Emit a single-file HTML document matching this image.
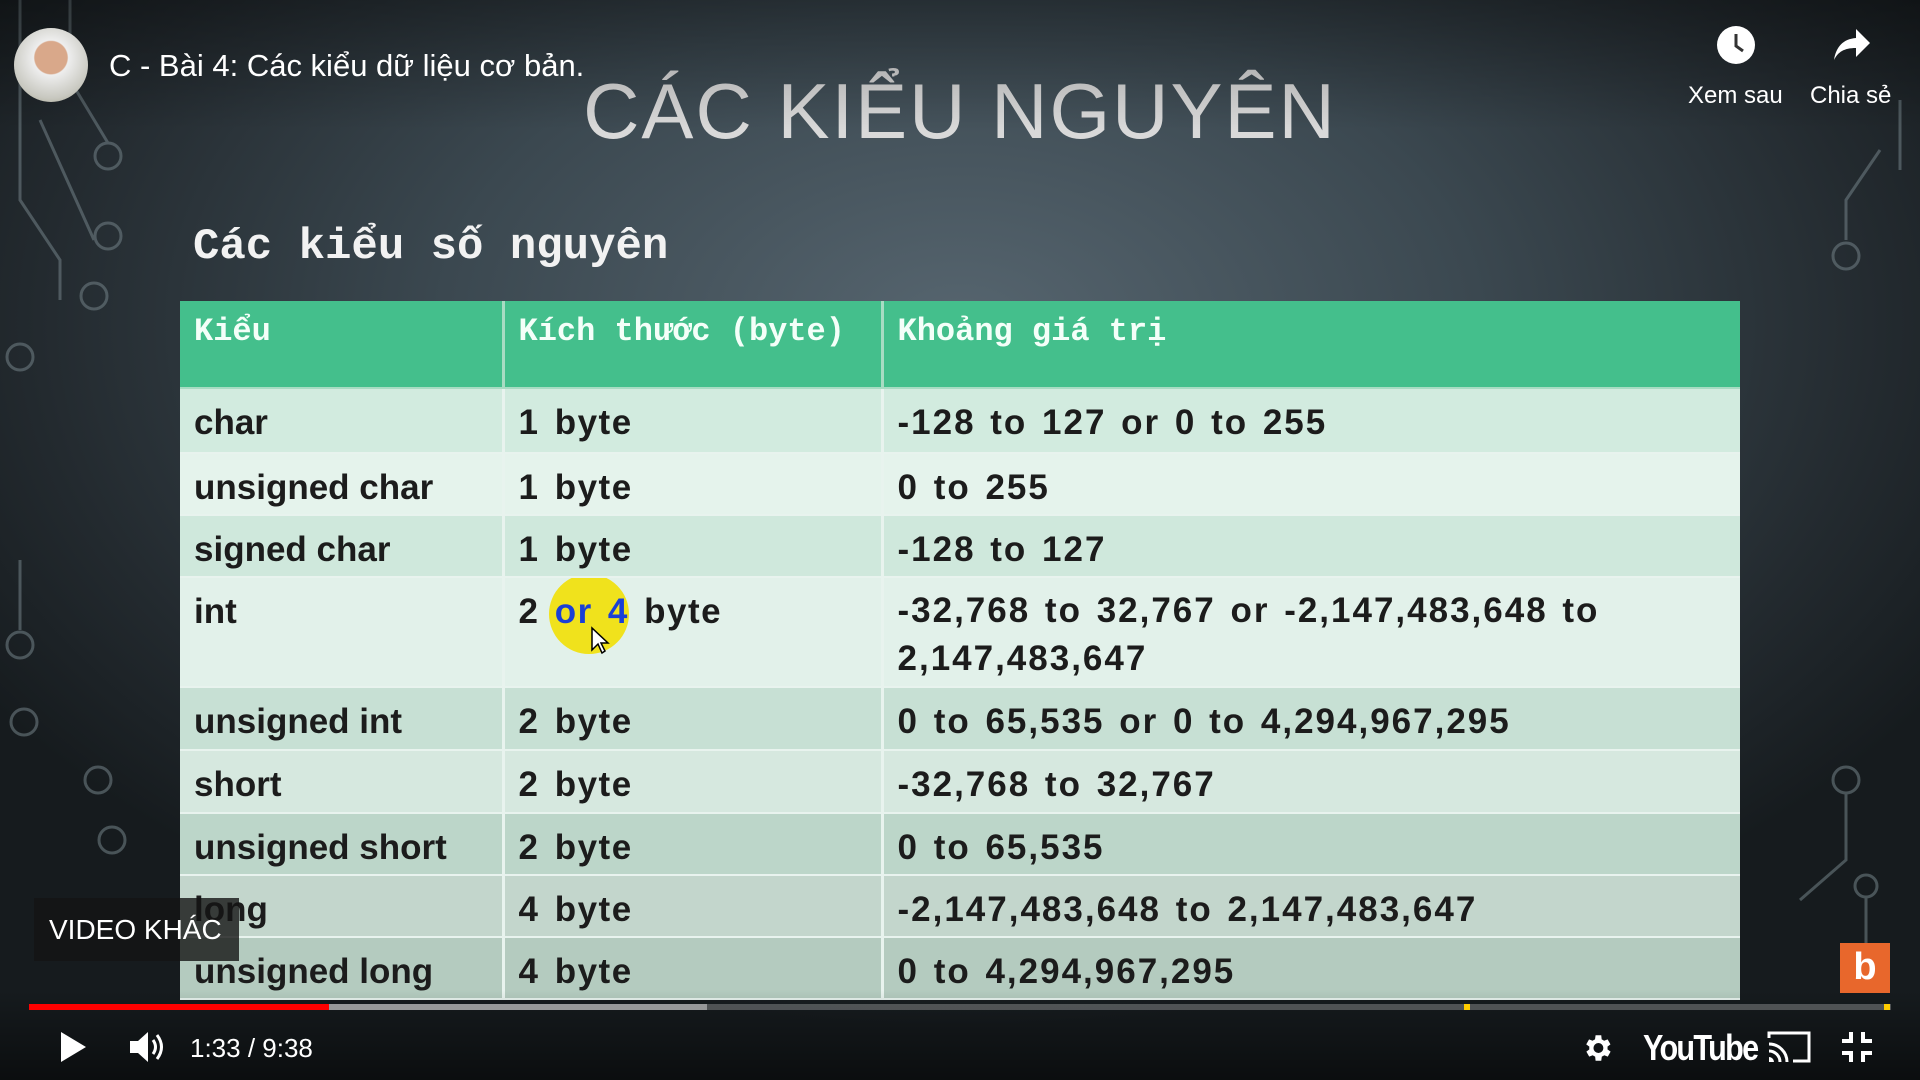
<!DOCTYPE html>
<html><head><meta charset="utf-8"><style>
*{margin:0;padding:0;box-sizing:border-box}
body{width:1920px;height:1080px;overflow:hidden;position:relative;font-family:"Liberation Sans",sans-serif;
background:radial-gradient(ellipse 60% 65% at 50% 30%,#56656f 0%,#3b4850 45%,#232a2f 80%,#161b1e 100%);}
.abs{position:absolute}
.title{left:0;width:1920px;top:66px;text-align:center;font-size:78px;color:#d9d9d9;letter-spacing:2px;font-weight:normal}
.sub{left:193px;top:222px;font-family:"Liberation Mono",monospace;font-weight:bold;font-size:44px;color:#f2f2f2}
table{position:absolute;left:180px;top:301px;width:1560px;border-collapse:collapse;table-layout:fixed;font-weight:bold;font-size:35px;color:#1c1c1c;white-space:nowrap}
td{border-right:3px solid #e8f3ee;border-bottom:2px solid #e8f3ee;padding:0 14px;vertical-align:top;overflow:hidden}
td:last-child{border-right:none}
td:nth-child(2){letter-spacing:1.5px;word-spacing:4px}
td:nth-child(3){letter-spacing:2px;word-spacing:3px}
tr.h td{background:#44bf8c;color:#f4fff9;font-family:"Liberation Mono",monospace;font-size:32px;height:87px;padding-top:12px;border-color:#a8dcc3;letter-spacing:0;word-spacing:0}
tr td{padding-top:14px}
.hl{position:relative;z-index:0;color:#1a3fd6}
.hl::before{content:"";position:absolute;left:-6px;top:-18px;width:80px;height:80px;border-radius:50%;background:#f0e21c;z-index:-1}
</style></head><body>
<svg class="abs" style="left:0;top:0" width="1920" height="1080" fill="none" stroke="#6c7a80" stroke-width="3" opacity=".6">
<path d="M20 0 V200 L60 260 V300"/><circle cx="108" cy="156" r="13"/><circle cx="108" cy="236" r="13"/><circle cx="94" cy="296" r="13"/><circle cx="20" cy="357" r="13"/>
<path d="M70 0 V80 L108 143"/><path d="M40 120 L94 240"/><path d="M20 560 V630"/><circle cx="20" cy="645" r="13"/><circle cx="24" cy="722" r="13"/><circle cx="98" cy="780" r="13"/><circle cx="112" cy="840" r="13"/>
<path d="M1880 150 L1846 200 V240"/><circle cx="1846" cy="256" r="13"/><circle cx="1846" cy="780" r="13"/><circle cx="1866" cy="886" r="11"/><path d="M1846 793 V860 L1800 900"/><path d="M1866 897 V950"/><path d="M1900 100 V170"/>
</svg>
<div class="abs title">CÁC KIỂU NGUYÊN</div>
<div class="abs sub">Các kiểu số nguyên</div>
<table>
<colgroup><col style="width:323px"><col style="width:379px"><col></colgroup>
<tr class="h"><td>Kiểu</td><td>Kích thước (byte)</td><td>Khoảng giá trị</td></tr>
<tr style="height:65px;background:#d2ebdf"><td>char</td><td>1 byte</td><td>-128 to 127 or 0 to 255</td></tr>
<tr style="height:62px;background:#e5f3ec"><td>unsigned char</td><td>1 byte</td><td>0 to 255</td></tr>
<tr style="height:62px;background:#cfe8dc"><td>signed char</td><td>1 byte</td><td>-128 to 127</td></tr>
<tr style="height:110px;background:#e2f1ea"><td>int</td><td>2 <span class="hl">or 4</span> byte</td><td style="line-height:48px;padding-top:9px">-32,768 to 32,767 or -2,147,483,648 to<br>2,147,483,647</td></tr>
<tr style="height:63px;background:#c7e0d4"><td>unsigned int</td><td>2 byte</td><td>0 to 65,535 or 0 to 4,294,967,295</td></tr>
<tr style="height:63px;background:#d6e8df"><td>short</td><td>2 byte</td><td>-32,768 to 32,767</td></tr>
<tr style="height:62px;background:#bcd6c9"><td>unsigned short</td><td>2 byte</td><td>0 to 65,535</td></tr>
<tr style="height:62px;background:#c3d6cc"><td>long</td><td>4 byte</td><td>-2,147,483,648 to 2,147,483,647</td></tr>
<tr style="height:62px;background:#b4cbbf"><td>unsigned long</td><td>4 byte</td><td>0 to 4,294,967,295</td></tr>
</table>
<svg class="abs" style="left:590px;top:626px" width="20" height="30"><path d="M2 2 V24 L8 18 L12 27 L15 25 L11 17 L18 17 Z" fill="#fff" stroke="#000" stroke-width="1.5"/></svg>
<div class="abs" style="left:0;top:0;width:1920px;height:130px;background:linear-gradient(rgba(0,0,0,.35),rgba(0,0,0,0))"></div>
<div class="abs" style="left:14px;top:28px;width:74px;height:74px;border-radius:50%;background:radial-gradient(circle at 50% 40%,#d9a88a 0 28%,#eee 30%,#c8c8c0 70%,#9a9a80 100%)"></div>
<div class="abs" style="left:109px;top:48px;font-size:31px;color:#fff">C - Bài 4: Các kiểu dữ liệu cơ bản.</div>
<svg class="abs" style="left:1716px;top:25px" width="40" height="40"><circle cx="20" cy="20" r="19" fill="#fff"/><path d="M20 9 V21 L27 26" stroke="#333" stroke-width="3" fill="none"/></svg>
<div class="abs" style="left:1688px;top:82px;font-size:24px;color:#fff">Xem sau</div>
<svg class="abs" style="left:1832px;top:27px" width="40" height="36"><path d="M24 2 L38 16 L24 30 V21 C12 21 6 25 2 33 C4 20 11 12 24 11 Z" fill="#fff"/></svg>
<div class="abs" style="left:1810px;top:82px;font-size:24px;color:#fff">Chia sẻ</div>
<div class="abs" style="left:0;top:990px;width:1920px;height:90px;background:linear-gradient(rgba(0,0,0,0),rgba(0,0,0,.5))"></div>
<div class="abs" style="left:34px;top:898px;width:205px;height:63px;background:rgba(20,20,20,.8)"></div>
<div class="abs" style="left:49px;top:914px;font-size:28px;color:#fff">VIDEO KHÁC</div>
<div class="abs" style="left:1840px;top:943px;width:50px;height:50px;background:#e8672c;color:#fff;font-size:38px;font-weight:bold;text-align:center;line-height:48px">b</div>
<div class="abs" style="left:29px;top:1004px;width:1862px;height:6px;background:rgba(255,255,255,.25)"></div>
<div class="abs" style="left:29px;top:1004px;width:678px;height:6px;background:rgba(200,200,200,.6)"></div>
<div class="abs" style="left:29px;top:1004px;width:300px;height:6px;background:#f00"></div>
<div class="abs" style="left:1464px;top:1004px;width:6px;height:6px;background:#fc0"></div>
<div class="abs" style="left:1884px;top:1004px;width:6px;height:6px;background:#fc0"></div>
<svg class="abs" style="left:58px;top:1030px" width="30" height="34"><path d="M3 2 L28 17 L3 32 Z" fill="#fff"/></svg>
<svg class="abs" style="left:128px;top:1030px" width="40" height="34"><path d="M2 11 H10 L20 2 V32 L10 23 H2 Z" fill="#fff"/><path d="M25 10 Q30 17 25 24 M29 5 Q38 17 29 29" stroke="#fff" stroke-width="3" fill="none"/></svg>
<div class="abs" style="left:190px;top:1033px;font-size:26px;color:#fff">1:33 / 9:38</div>
<svg class="abs" style="left:1580px;top:1031px" width="34" height="34" viewBox="0 0 24 24"><path fill="#fff" d="M19.4 13a7.5 7.5 0 000-2l2.1-1.6-2-3.5-2.5 1a7 7 0 00-1.7-1L15 3h-4l-.4 2.9a7 7 0 00-1.7 1l-2.5-1-2 3.5L6.6 11a7.5 7.5 0 000 2l-2.1 1.6 2 3.5 2.5-1a7 7 0 001.7 1L11 21h4l.4-2.9a7 7 0 001.7-1l2.5 1 2-3.5zM13 15.5a3.5 3.5 0 110-7 3.5 3.5 0 010 7z"/></svg>
<div class="abs" style="left:1643px;top:1027px;font-size:36px;color:#fff;font-weight:bold;letter-spacing:-2px;transform:scaleX(.85);transform-origin:left">YouTube</div>
<svg class="abs" style="left:1767px;top:1030px" width="44" height="34"><path d="M2 8 V3 H42 V31 H26" stroke="#fff" stroke-width="3" fill="none"/><path d="M2 14 A18 18 0 0 1 20 32 M2 21 A11 11 0 0 1 13 32" stroke="#fff" stroke-width="3" fill="none"/><path d="M2 27 A5 5 0 0 1 7 32 H2Z" fill="#fff"/></svg>
<svg class="abs" style="left:1840px;top:1030px" width="34" height="34"><path d="M11 2 V11 H2 M23 2 V11 H32 M11 32 V23 H2 M23 32 V23 H32" stroke="#fff" stroke-width="4" fill="none"/></svg>
</body></html>
